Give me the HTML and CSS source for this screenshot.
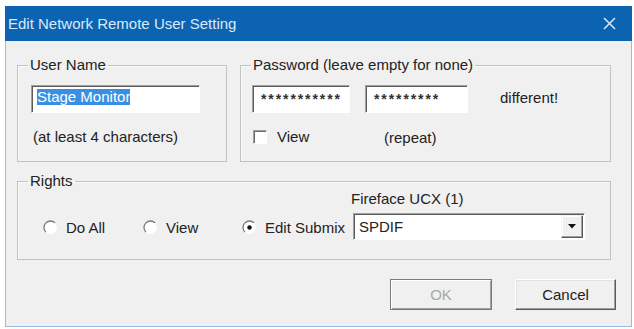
FILE: index.html
```html
<!DOCTYPE html>
<html>
<head>
<meta charset="utf-8">
<title>Edit Network Remote User Setting</title>
<link rel="stylesheet" href="styles.css">
</head>
<body>
<div class="window">
  <div class="titlebar">
    <span class="title">Edit Network Remote User Setting</span>
    <svg class="close" width="13" height="13" viewBox="0 0 13 13"><path d="M1 1 L12 12 M12 1 L1 12" stroke="#d3e5f6" stroke-width="1.6" fill="none"/></svg>
  </div>
  <div class="client">
    <div class="row1">
      <fieldset class="group g-user">
        <legend>User Name</legend>
        <div class="user-body">
          <div class="edit edit-user"><span class="sel">Stage Monitor</span></div>
          <div class="hint">(at least 4 characters)</div>
        </div>
      </fieldset>
      <fieldset class="group g-pass">
        <legend>Password (leave empty for none)</legend>
        <div class="pass-body">
          <div class="pass-row">
            <div class="edit edit-pw1"><span class="stars">***********</span></div>
            <div class="edit edit-pw2"><span class="stars">*********</span></div>
            <span class="diff">different!</span>
          </div>
          <div class="pass-row2">
            <label class="checkline"><span class="check"></span><span>View</span></label>
            <span class="repeat">(repeat)</span>
          </div>
        </div>
      </fieldset>
    </div>
    <fieldset class="group g-rights">
      <legend>Rights</legend>
      <div class="rights-body">
        <label class="radio r1"><svg class="rb" width="15" height="15" viewBox="0 0 15 15"><circle cx="7.5" cy="7.5" r="6.5" fill="#fff"/><path d="M2.9 12.1 A6.5 6.5 0 0 1 12.1 2.9" stroke="#7a7a7a" stroke-width="1.3" fill="none"/></svg><span>Do All</span></label>
        <label class="radio r2"><svg class="rb" width="15" height="15" viewBox="0 0 15 15"><circle cx="7.5" cy="7.5" r="6.5" fill="#fff"/><path d="M2.9 12.1 A6.5 6.5 0 0 1 12.1 2.9" stroke="#7a7a7a" stroke-width="1.3" fill="none"/></svg><span>View</span></label>
        <label class="radio r3"><svg class="rb" width="15" height="15" viewBox="0 0 15 15"><circle cx="7.5" cy="7.5" r="6.5" fill="#fff"/><path d="M2.9 12.1 A6.5 6.5 0 0 1 12.1 2.9" stroke="#7a7a7a" stroke-width="1.3" fill="none"/><circle cx="7.5" cy="7.5" r="2.2" fill="#111"/></svg><span>Edit Submix</span></label>
        <div class="device">
          <div class="device-label">Fireface UCX (1)</div>
          <div class="combo">
            <span class="combo-text">SPDIF</span>
            <span class="combo-btn"><svg width="8" height="5" viewBox="0 0 8 5"><path d="M0 0 H8 L4 4.5 Z" fill="#111"/></svg></span>
          </div>
        </div>
      </div>
    </fieldset>
    <div class="buttons">
      <button class="btn btn-ok" disabled>OK</button>
      <button class="btn btn-cancel">Cancel</button>
    </div>
  </div>
</div>
</body>
</html>
```

FILE: styles.css
```css
html, body {
  margin: 0;
  padding: 0;
  background: #ffffff;
}
body {
  font-family: "Liberation Sans", Arial, sans-serif;
  font-size: 15px;
  color: #222222;
  padding: 6px 0 0 5px;
}
.window {
  width: 627px;
  height: 321px;
  display: flex;
  flex-direction: column;
}
.titlebar {
  height: 35px;
  flex: none;
  background: #0c63b2;
  color: #dbe9f7;
  display: flex;
  align-items: center;
  justify-content: space-between;
  padding: 0 16px 0 3px;
}
.title {
  font-size: 15px;
  line-height: 16px;
}
.close {
  display: block;
}
.client {
  flex: 1;
  background: #f0f0f0;
  border: 1px solid #95bde4;
  border-top: none;
  padding: 16px 15px 0 11px;
}
.row1 {
  display: flex;
  gap: 13px;
}
fieldset.group {
  margin: 0;
  padding: 0;
  min-width: 0;
  box-sizing: border-box;
  border: 1px solid #c2c2c2;
  box-shadow: inset 1px 1px 0 #fafafa;
}
fieldset.group legend {
  margin-left: 10px;
  padding: 0 2px;
  line-height: 16px;
  font-size: 15px;
}
.g-user {
  width: 210px;
  height: 105px;
}
.g-pass {
  width: 371px;
  height: 105px;
}
.edit {
  box-sizing: border-box;
  height: 28px;
  background: #ffffff;
  border-top: 1px solid #a0a0a0;
  border-left: 1px solid #a0a0a0;
  border-right: 1px solid #ffffff;
  border-bottom: 1px solid #ffffff;
  box-shadow: inset 1px 1px 0 #5c5c5c;
  line-height: 16px;
  overflow: hidden;
  white-space: nowrap;
}
.user-body {
  padding: 12px 0 0 13px;
}
.edit-user {
  width: 169px;
  padding: 3px 0 0 5px;
}
.sel {
  background: #3b8fe3;
  color: #ffffff;
  display: inline-block;
}
.hint {
  margin: 16px 0 0 2px;
  line-height: 16px;
}
.pass-body {
  padding: 12px 0 0 11px;
}
.pass-row {
  display: flex;
  align-items: flex-start;
}
.edit-pw1 {
  width: 98px;
  padding: 5px 0 0 8px;
}
.edit-pw2 {
  width: 103px;
  margin-left: 15px;
  padding: 5px 0 0 8px;
}
.stars {
  letter-spacing: 1.9px;
  font-size: 14px;
  font-weight: bold;
  color: #333333;
}
.diff {
  margin-left: 32px;
  line-height: 16px;
  padding-top: 5px;
}
.pass-row2 {
  display: flex;
  align-items: center;
  margin-top: 14px;
  padding-left: 1px;
}
.checkline {
  display: flex;
  align-items: center;
  gap: 10px;
  width: 131px;
}
.check {
  width: 14px;
  height: 14px;
  box-sizing: border-box;
  background: #ffffff;
  border-top: 1px solid #a0a0a0;
  border-left: 1px solid #a0a0a0;
  border-right: 1px solid #ffffff;
  border-bottom: 1px solid #ffffff;
  box-shadow: inset 1px 1px 0 #6a6a6a;
}
.repeat {
  line-height: 16px;
  margin-top: 3px;
}
.g-rights {
  width: 594px;
  height: 87px;
  margin-top: 11px !important;
}
.rights-body {
  display: flex;
  align-items: flex-end;
  padding: 2px 0 0 25px;
}
.radio {
  display: flex;
  align-items: center;
  gap: 8px;
  height: 27px;
  margin-bottom: -1px;
}
.rb {
  display: block;
  flex: none;
}
.r1 {
  width: 100px;
}
.r2 {
  width: 99px;
}
.r3 {
  width: 111px;
}
.device {
  display: flex;
  flex-direction: column;
}
.device-label {
  line-height: 16px;
  margin: 0 0 6px -2px;
}
.combo {
  width: 232px;
  height: 27px;
  box-sizing: border-box;
  background: #ffffff;
  border-top: 1px solid #a0a0a0;
  border-left: 1px solid #a0a0a0;
  border-right: 1px solid #ffffff;
  border-bottom: 1px solid #ffffff;
  box-shadow: inset 1px 1px 0 #5c5c5c;
  display: flex;
  align-items: center;
  justify-content: space-between;
  padding: 1px 1px 1px 5px;
}
.combo-text {
  line-height: 16px;
}
.combo-btn {
  width: 22px;
  height: 23px;
  box-sizing: border-box;
  background: #f0f0f0;
  border-top: 1px solid #f4f4f4;
  border-left: 1px solid #f4f4f4;
  border-right: 1px solid #5a5a5a;
  border-bottom: 1px solid #5a5a5a;
  box-shadow: inset -1px -1px 0 #a0a0a0, inset 1px 1px 0 #ffffff;
  display: flex;
  align-items: center;
  justify-content: center;
}
.combo-btn svg {
  display: block;
}
.buttons {
  display: flex;
  justify-content: flex-end;
  gap: 23px;
  margin-top: 19px;
}
.btn {
  width: 102px;
  height: 31px;
  box-sizing: border-box;
  font-family: "Liberation Sans", Arial, sans-serif;
  font-size: 15px;
  background: #f0f0f0;
  padding: 0;
  margin: 0;
}
.btn-ok {
  color: #a8a8a8;
  border: 1px solid #7a7a7a;
  box-shadow: inset 1px 1px 0 #ffffff, inset -1px -1px 0 #a0a0a0;
}
.btn-cancel {
  width: 101px;
  color: #222222;
  border-top: 1px solid #ffffff;
  border-left: 1px solid #ffffff;
  border-right: 1px solid #5a5a5a;
  border-bottom: 1px solid #5a5a5a;
  box-shadow: inset -1px -1px 0 #a0a0a0, inset 1px 1px 0 #e3e3e3;
}
```
